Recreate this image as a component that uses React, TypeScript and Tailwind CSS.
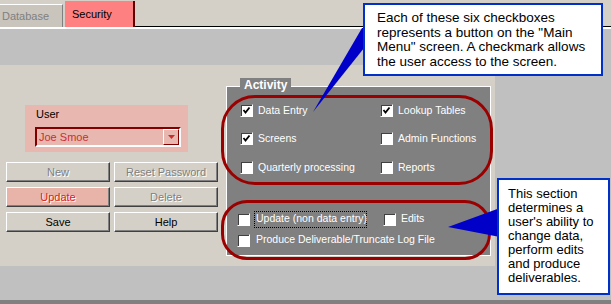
import React from 'react';

const sunken = 'border border-t-[#808080] border-l-[#808080] border-b-white border-r-white';

function Check({ checked }: { checked?: boolean }) {
  return (
    <span className={`w-[13px] h-[13px] shrink-0 bg-white ${sunken} shadow-[inset_1px_1px_0_#404040] flex items-center justify-center`}>
      {checked && (
        <svg width="9" height="9" viewBox="0 0 9 9">
          <path d="M1.5 4 L3.5 6.5 L7.5 1.5" stroke="#000" strokeWidth="1.8" fill="none" />
        </svg>
      )}
    </span>
  );
}

function Item({ label, checked }: { label: string; checked?: boolean }) {
  return (
    <div className="h-[20px] flex items-center gap-[5px]">
      <Check checked={checked} />
      <span className="text-white text-[10.5px] leading-[13px] whitespace-nowrap">{label}</span>
    </div>
  );
}

function WinButton({ label, tone = 'normal' }: { label: string; tone?: 'normal' | 'disabled' | 'pink' }) {
  const bg = tone === 'pink' ? 'bg-[#e8b4aa]' : 'bg-[#d4d0c8]';
  const text =
    tone === 'disabled'
      ? 'text-[#808080] [text-shadow:1px_1px_0_#fff]'
      : tone === 'pink'
        ? 'text-[#e02020] [text-shadow:1px_1px_0_#fff]'
        : 'text-black';
  return (
    <div
      className={`h-[20px] flex items-center justify-center text-[11px] whitespace-nowrap ${bg} ${text} border border-t-white border-l-white border-b-[#404040] border-r-[#404040] shadow-[inset_-1px_-1px_0_#808080]`}
    >
      {label}
    </div>
  );
}

export default function App() {
  return (
    <div className="relative w-[611px] h-[304px] overflow-hidden bg-[#c0c0c0] flex flex-col font-['Liberation_Sans',Arial,sans-serif]">
      {/* tab strip */}
      <div className="h-[29px] bg-[#d4d0c8] border-b-2 border-white flex items-end shrink-0">
        <div className="w-[63px] h-[23px] bg-[#c9c5bd] border-t border-white border-r border-r-[#808080] flex items-center pl-[2px] text-[11px] text-[#808080]">
          Database
        </div>
        <div className="w-[2px]" />
        <div className="w-[70px] h-[26px] bg-[#ff8080] border-r-2 border-r-[#600000] flex items-center pl-[7px] text-[11px] text-black">
          Security
        </div>
        <div className="flex-1 h-[26px] border-b border-black" />
      </div>

      <div className="h-[36px] shrink-0" />

      {/* main panel */}
      <div className="w-[495px] h-[201px] bg-[#d4d0c8] flex shrink-0">
        <div className="w-[226px] pl-[6px] pt-[40px]">
          <div className="ml-[19px] w-[163px] h-[47px] bg-[#e8b8b0] pl-[10px] pt-[2px]">
            <div className="pl-[1px] text-[11px] leading-[14px] text-black">User</div>
            <div className="mt-[6px] w-[146px] h-[20px] border-2 border-t-[#800000] border-l-[#800000] border-b-white border-r-white flex items-center justify-between pl-[2px]">
              <span className="text-[11px] text-[#c83030]">Joe Smoe</span>
              <span className="w-[16px] h-[16px] bg-[#e8b8b0] border border-t-white border-l-white border-b-[#800000] border-r-[#800000] flex items-center justify-center">
                <svg width="7" height="4" viewBox="0 0 7 4">
                  <path d="M0 0 H7 L3.5 4 Z" fill="#c83030" />
                </svg>
              </span>
            </div>
          </div>
          <div className="mt-[10px] grid grid-cols-[104px_104px] gap-x-[4px] gap-y-[5px]">
            <WinButton label="New" tone="disabled" />
            <WinButton label="Reset Password" tone="disabled" />
            <WinButton label="Update" tone="pink" />
            <WinButton label="Delete" tone="disabled" />
            <WinButton label="Save" />
            <WinButton label="Help" />
          </div>
        </div>

        {/* Activity group */}
        <div className="relative mt-[21px] w-[265px] h-[170px] bg-[#808080] border border-white">
          <div className="absolute -top-[9px] left-[13px] h-[15px] px-[4px] bg-[#808080] text-white font-bold text-[12px] leading-[15px]">
            Activity
          </div>
          <div className="pt-[13px] pl-[13px] grid grid-cols-[140px_1fr] gap-y-[8.5px]">
            <Item label="Data Entry" checked />
            <Item label="Lookup Tables" checked />
            <Item label="Screens" checked />
            <Item label="Admin Functions" />
            <Item label="Quarterly processing" />
            <Item label="Reports" />
          </div>
          <div className="mt-[32px] pl-[10px] flex flex-col gap-[1px]">
            <div className="h-[20px] flex items-center">
              <Check />
              <span className="ml-[4px] w-[113px] h-[17px] border border-dotted border-black flex items-center pl-[1px] text-white text-[10.5px] whitespace-nowrap">
                Update (non data entry)
              </span>
              <span className="ml-[16px]">
                <Check />
              </span>
              <span className="ml-[5px] text-white text-[10.5px]">Edits</span>
            </div>
            <div className="h-[20px] flex items-center gap-[6px]">
              <Check />
              <span className="text-white text-[10.5px] whitespace-nowrap">Produce Deliverable/Truncate Log File</span>
            </div>
          </div>
        </div>
      </div>

      <div className="flex-1" />
      <div className="h-[4px] bg-[#808080] shrink-0" />

      {/* annotations */}
      <div className="absolute left-[221px] top-[95px] w-[272px] h-[90px] border-[3px] border-[#9a0000] rounded-[34px]" />
      <div className="absolute left-[221px] top-[200px] w-[270px] h-[60px] border-[3px] border-[#9a0000] rounded-[26px]" />

      <svg className="absolute left-0 top-0" width="611" height="304">
        <polygon points="313,112 362,28 380,28" fill="#0000c8" />
        <polygon points="448,227 500,208 500,237" fill="#0000c8" />
      </svg>

      <div className="absolute left-[363px] top-[3px] w-[240px] h-[73px] bg-white border-2 border-[#0030c8] pl-[12px] pt-[6px] text-[13.5px] leading-[14.5px] text-black whitespace-nowrap">
        Each of these six checkboxes
        <br />
        represents a button on the "Main
        <br />
        Menu" screen. A checkmark allows
        <br />
        the user access to the screen.
      </div>
      <div className="absolute left-[497px] top-[178px] w-[113px] h-[117px] bg-white border-2 border-[#0030c8] pl-[9px] pt-[7px] text-[13px] leading-[14px] text-black whitespace-nowrap">
        This section
        <br />
        determines a
        <br />
        user's ability to
        <br />
        change data,
        <br />
        perform edits
        <br />
        and produce
        <br />
        deliverables.
      </div>
    </div>
  );
}
